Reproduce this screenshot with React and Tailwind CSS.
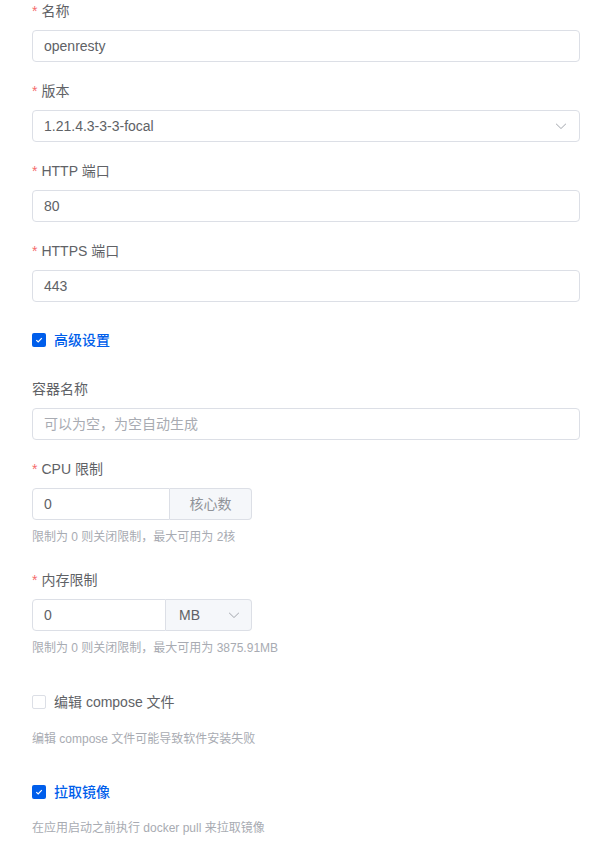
import React from "react";

const font = { fontFamily: '"Liberation Sans", "Noto Sans CJK SC", sans-serif' };

function Label({ children, required = true }) {
  return (
    <div className="h-[22px] leading-[22px] text-[14px] text-[#606266] mb-2 flex items-center">
      {required && <span className="text-[#f56c6c] mr-1 text-[14px]">*</span>}
      <span>{children}</span>
    </div>
  );
}

function Input({ value, placeholder, suffix }) {
  return (
    <div className="h-8 w-full rounded-[4px] border border-[#dcdfe6] bg-white flex items-center px-[11px] text-[14px]">
      <span className={value ? "text-[#606266] flex-1" : "text-[#a8abb2] flex-1"}>{value || placeholder}</span>
      {suffix}
    </div>
  );
}

function Chevron({ className = "" }) {
  return (
    <svg className={className} width="14" height="14" viewBox="0 0 1024 1024" fill="#a8abb2">
      <path d="M831.872 340.864 512 652.672 192.128 340.864a30.592 30.592 0 0 0-42.752 0 29.12 29.12 0 0 0 0 41.6L489.664 714.24a32 32 0 0 0 44.672 0l340.288-331.712a29.12 29.12 0 0 0 0-41.728 30.592 30.592 0 0 0-42.752 0z" />
    </svg>
  );
}

function Checkbox({ checked, children }) {
  return (
    <div className="flex items-center h-8">
      {checked ? (
        <span className="w-[14px] h-[14px] rounded-[2px] bg-[#005eeb] flex items-center justify-center">
          <svg width="10" height="10" viewBox="0 0 10 10" fill="none">
            <path d="M2.3 5.1 4.2 7 7.8 3.2" stroke="white" strokeWidth="1.2" />
          </svg>
        </span>
      ) : (
        <span className="w-[14px] h-[14px] rounded-[2px] border border-[#dcdfe6] bg-white" />
      )}
      <span className={"ml-2 text-[14px] " + (checked ? "text-[#005eeb] font-medium" : "text-[#606266]")}>{children}</span>
    </div>
  );
}

function Help({ children }) {
  return <div className="text-[12px] leading-[20px] text-[#a8abb2]">{children}</div>;
}

export default function App() {
  return (
    <div className="w-[612px] h-[845px] bg-white px-8 overflow-hidden" style={font}>
      <div>
        <Label>名称</Label>
        <Input value="openresty" />
      </div>
      <div className="mt-[18px]">
        <Label>版本</Label>
        <Input value="1.21.4.3-3-3-focal" suffix={<Chevron />} />
      </div>
      <div className="mt-[18px]">
        <Label>HTTP 端口</Label>
        <Input value="80" />
      </div>
      <div className="mt-[18px]">
        <Label>HTTPS 端口</Label>
        <Input value="443" />
      </div>
      <div className="mt-[22px]">
        <Checkbox checked>高级设置</Checkbox>
      </div>
      <div className="mt-[22px]">
        <Label required={false}>容器名称</Label>
        <Input placeholder="可以为空，为空自动生成" />
      </div>
      <div className="mt-[18px]">
        <Label>CPU 限制</Label>
        <div className="flex w-[220px] h-8 text-[14px]">
          <div className="flex-1 border border-[#dcdfe6] rounded-l-[4px] flex items-center px-[11px] text-[#606266]">0</div>
          <div className="w-[82px] border border-l-0 border-[#dcdfe6] rounded-r-[4px] bg-[#f5f7fa] flex items-center justify-center text-[#909399]">核心数</div>
        </div>
        <div className="mt-[7px]"><Help>限制为 0 则关闭限制，最大可用为 2核</Help></div>
      </div>
      <div className="mt-[22px]">
        <Label>内存限制</Label>
        <div className="flex w-[220px] h-8 text-[14px]">
          <div className="flex-1 border border-[#dcdfe6] rounded-l-[4px] flex items-center px-[11px] text-[#606266]">0</div>
          <div className="w-[86px] border border-l-0 border-[#dcdfe6] rounded-r-[4px] bg-[#f5f7fa] flex items-center pl-[13px] pr-[10px] text-[#606266]">
            <span className="flex-1">MB</span>
            <Chevron />
          </div>
        </div>
        <div className="mt-[7px]"><Help>限制为 0 则关闭限制，最大可用为 3875.91MB</Help></div>
      </div>
      <div className="mt-[28px]">
        <Checkbox>编辑 compose 文件</Checkbox>
        <div className="mt-[11px]"><Help>编辑 compose 文件可能导致软件安装失败</Help></div>
      </div>
      <div className="mt-[27px]">
        <Checkbox checked>拉取镜像</Checkbox>
        <div className="mt-[10px]"><Help>在应用启动之前执行 docker pull 来拉取镜像</Help></div>
      </div>
    </div>
  );
}
